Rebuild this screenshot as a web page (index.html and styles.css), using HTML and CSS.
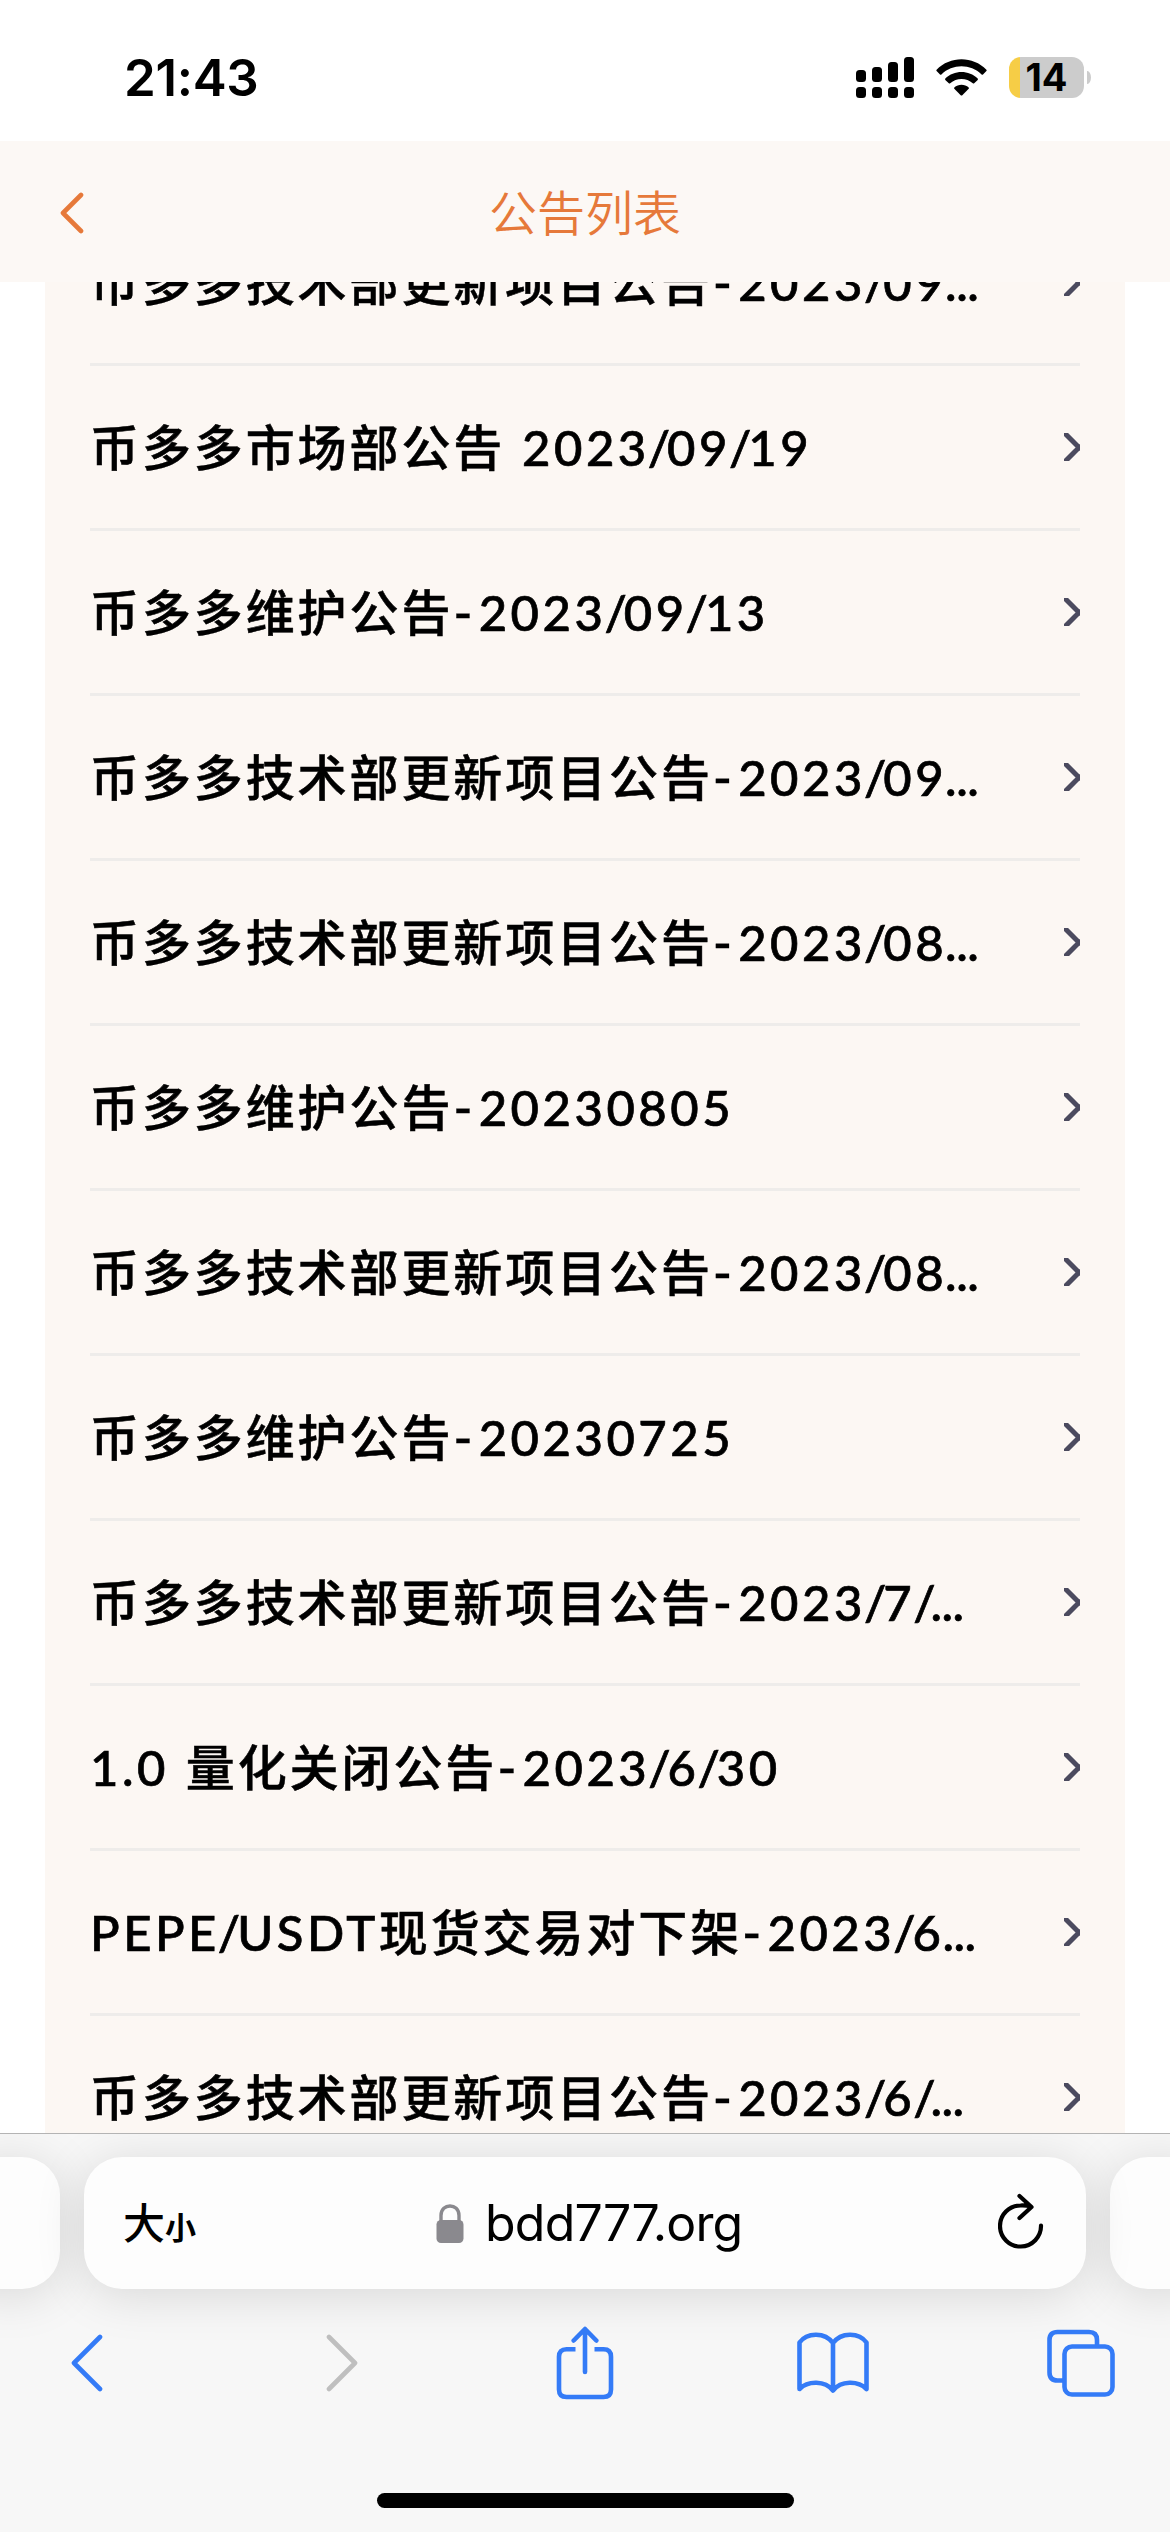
FILE: index.html
```html
<!DOCTYPE html>
<html lang="zh-CN">
<head>
    <meta charset="UTF-8">
    <title>公告列表</title>
    <link rel="stylesheet" href="styles.css">
</head>
<body>
    <div class="status-bar">
        <div class="time">21:43</div>
        <div class="status-icons">
            <svg class="signal" width="58" height="41" viewBox="0 0 58 41">
                <rect x="0" y="13" width="10" height="12" rx="3.5"/>
                <rect x="16" y="10" width="10" height="15" rx="3.5"/>
                <rect x="32" y="5" width="10" height="20" rx="3.5"/>
                <rect x="48" y="0" width="10" height="25" rx="3.5"/>
                <rect x="0" y="30" width="10" height="11" rx="3.5"/>
                <rect x="16" y="30" width="10" height="11" rx="3.5"/>
                <rect x="32" y="30" width="10" height="11" rx="3.5"/>
                <rect x="48" y="30" width="10" height="11" rx="3.5"/>
            </svg>
            <svg class="wifi" width="51" height="37" viewBox="0 0 51 37">
                <path d="M0.6 10.8C14-3.2 37-3.2 50.4 10.8Q50.9 11.4 50.4 12L47 15.4Q46.3 16 45.6 15.4C34.5 4.6 16.5 4.6 5.4 15.4Q4.7 16 4 15.4L0.6 12Q0.1 11.4 0.6 10.8Z"/>
                <path d="M9.3 19.6C18 10.8 33 10.8 41.7 19.6Q42.2 20.3 41.7 20.9L38.2 24.3Q37.5 24.9 36.8 24.3C30.5 18.5 20.5 18.5 14.2 24.3Q13.5 24.9 12.8 24.3L9.3 20.9Q8.8 20.3 9.3 19.6Z"/>
                <path d="M18.3 28.5C22.3 24.8 28.7 24.8 32.7 28.5Q33.2 29.2 32.7 29.8L26.3 36.2Q25.5 36.9 24.7 36.2L18.3 29.8Q17.8 29.2 18.3 28.5Z"/>
            </svg>
            <div class="battery"><span>14</span></div>
            <div class="battery-tip"></div>
        </div>
    </div>

    <div class="nav-bar">
        <svg class="nav-back" width="24" height="42" viewBox="0 0 24 42">
            <path d="M21 3L3 21L21 39"/>
        </svg>
        <h1>公告列表</h1>
    </div>

    <div class="content">
        <ul class="notice-list" id="noticeList"></ul>
    </div>

    <div class="browser-bar">
        <div class="tabs">
            <div class="tab tab-side"></div>
            <div class="tab tab-current">
                <div class="text-size">大<small>小</small></div>
                <div class="url">
                    <svg width="28" height="39" viewBox="0 0 28 39">
                        <path d="M5 18V11.5C5 -1.2 23 -1.2 23 11.5V18" fill="none" stroke="#8a898e" stroke-width="3.4"/>
                        <rect x="0.5" y="16" width="27" height="23" rx="4.5" fill="#8a898e"/>
                    </svg>
                    <span>bdd777.org</span>
                </div>
                <svg class="reload" width="46" height="56" viewBox="0 0 46 56">
                    <path d="M43 32.5A20.5 20.5 0 1 1 22.5 12.5Q28 12.2 33 13.6M21.5 3L33.5 14L21.5 25"/>
                </svg>
            </div>
            <div class="tab tab-side"></div>
        </div>
        <div class="toolbar">
            <svg class="back" width="34" height="58" viewBox="0 0 34 58"><path d="M30 3L4 29L30 55"/></svg>
            <svg class="forward" width="34" height="58" viewBox="0 0 34 58"><path d="M4 3L30 29L4 55"/></svg>
            <svg width="58" height="74" viewBox="0 0 58 74">
                <path d="M19.5 23.2H10.5Q3 23.2 3 30.7V63.5Q3 71 10.5 71H47.5Q55 71 55 63.5V30.7Q55 23.2 47.5 23.2H38.5" stroke-linecap="butt"/>
                <path d="M29 46V4M17.7 14.5L29 3L40.3 14.5"/>
            </svg>
            <svg width="72" height="62" viewBox="0 0 72 62">
                <path d="M36 11C28 0 10 0 2.5 10.5V57C11 48.5 28 48.5 36 58.5C44 48.5 61 48.5 69.5 57V10.5C62 0 44 0 36 11V58"/>
            </svg>
            <svg width="68" height="68" viewBox="0 0 68 68">
                <path d="M17.5 51.5H10.5Q2.5 51.5 2.5 43.5V11Q2.5 3 10.5 3H42Q50 3 50 11V17.5" stroke-linecap="butt"/>
                <rect x="17.5" y="17.5" width="48" height="48" rx="7.5"/>
            </svg>
        </div>
        <div class="home-indicator"></div>
    </div>

    <script>
        const noticeList = document.getElementById('noticeList');
        const notices = [
            '币多多技术部更新项目公告-2023/09...',
            '币多多市场部公告 2023/09/19',
            '币多多维护公告-2023/09/13',
            '币多多技术部更新项目公告-2023/09...',
            '币多多技术部更新项目公告-2023/08...',
            '币多多维护公告-20230805',
            '币多多技术部更新项目公告-2023/08...',
            '币多多维护公告-20230725',
            '币多多技术部更新项目公告-2023/7/...',
            '1.0 量化关闭公告-2023/6/30',
            'PEPE/USDT现货交易对下架-2023/6...',
            '币多多技术部更新项目公告-2023/6/...'
        ];

        // latin text, dashes, slashes and dots each get their own spacing
        function partClass(part) {
            if (part === '-') return 'dash';
            if (part === '/') return 'slash';
            if (part === '...') return 'dots';
            return /[A-Z\d ]/.test(part) ? 'latin' : 'cjk';
        }

        notices.forEach(function(title) {
            const item = document.createElement('li');
            const text = document.createElement('p');
            const arrow = document.createElement('b');
            arrow.className = 'arrow';

            title.match(/\.\.\.|[-\/]|[A-Z]+|[\d ]+(\.\d+ ?)?|[^\x00-\x7f]+/g).forEach(function(part) {
                const span = document.createElement('span');
                span.className = partClass(part);
                span.textContent = part;
                text.appendChild(span);
            });

            item.appendChild(text);
            item.appendChild(arrow);
            noticeList.appendChild(item);
        });
    </script>
</body>
</html>
```

FILE: styles.css
```css
* {
    margin: 0;
    padding: 0;
    box-sizing: border-box;
}

body {
    width: 1170px;
    height: 2532px;
    overflow: hidden;
    display: flex;
    flex-direction: column;
    background-color: #ffffff;
    color: #000000;
    font-family: Inter, "Noto Sans CJK SC", sans-serif;
}

.status-bar {
    height: 141px;
    padding: 0 79px 0 124px;
    display: flex;
    justify-content: space-between;
    align-items: flex-start;
}

.time {
    padding-top: 47px;
    font-size: 51px;
    font-weight: 600;
    line-height: 62px;
    letter-spacing: -0.3px;
}

.status-icons {
    display: flex;
    align-items: center;
    padding-top: 57px;
}

.wifi {
    margin: 0 22px;
}

.battery {
    width: 75px;
    height: 41px;
    border-radius: 12px;
    background: linear-gradient(to right, #f6cd46 11px, #cccccc 11px);
    font-size: 38px;
    font-weight: 700;
    line-height: 41px;
    text-align: center;
}

.battery-tip {
    width: 4px;
    height: 13px;
    margin-left: 3px;
    border-radius: 0 4px 4px 0 / 0 7px 7px 0;
    background-color: #cccccc;
}

.nav-bar {
    height: 141px;
    flex: none;
    position: relative;
    display: flex;
    align-items: center;
    justify-content: center;
    background-color: #fcf8f5;
    color: #e6793a;
}

.nav-back {
    position: absolute;
    left: 60px;
    top: 51px;
    fill: none;
    stroke: #e6793a;
    stroke-width: 4.6;
    stroke-linecap: round;
    stroke-linejoin: round;
}

.nav-bar h1 {
    padding-bottom: 4px;
    font-family: "Noto Sans CJK SC", sans-serif;
    font-size: 48px;
    font-weight: 350;
    line-height: 70px;
}

.content {
    height: 1851px;
    flex: none;
    padding: 0 45px;
    overflow: hidden;
}

/* list is scrolled up under the nav bar */
.notice-list {
    margin-top: -81px;
    padding: 0 45px;
    list-style: none;
    background-color: #fcf7f3;
}

.notice-list li {
    height: 165px;
    display: flex;
    align-items: center;
    justify-content: space-between;
    border-bottom: 3px solid #eeecea;
}

.notice-list p {
    padding-bottom: 3px;
    font-family: Lato, "Noto Sans CJK SC", sans-serif;
    font-size: 49px;
    font-weight: 500;
    line-height: 72px;
    white-space: pre;
    -webkit-text-stroke: 0.7px #000000;
}

.cjk {
    font-family: "Noto Sans CJK SC", sans-serif;
    letter-spacing: 2.9px;
    -webkit-text-stroke: 0.5px #000000;
}

.latin {
    letter-spacing: 3.5px;
    word-spacing: 1px;
}

.dash {
    margin-left: 1px;
    font-family: "Noto Sans", sans-serif;
    font-size: 54px;
    font-weight: 400;
    line-height: 1;
    letter-spacing: 7px;
    -webkit-text-stroke: 0.3px #000000;
}

.slash {
    margin-left: -2px;
    letter-spacing: -3px;
}

.dots {
    margin-left: -2px;
    letter-spacing: -0.5px;
}

.arrow {
    width: 16px;
    height: 28px;
    overflow: hidden;
    display: flex;
    align-items: center;
    justify-content: flex-end;
}

.arrow::before {
    content: "";
    flex: none;
    width: 22px;
    height: 22px;
    margin-right: 3px;
    border: solid #4b4a5e;
    border-width: 5px 5px 0 0;
    transform: rotate(45deg);
}

.browser-bar {
    height: 399px;
    flex: none;
    overflow: hidden;
    border-top: 1px solid #b4b4b4;
    background-color: #f7f7f7;
}

.tabs {
    margin: 23px -40px 0;
    display: flex;
    gap: 24px;
}

.tab {
    height: 132px;
    border-radius: 38px;
    background-color: #fdfdfd;
    box-shadow: 0 6px 50px rgba(0, 0, 0, 0.13);
}

.tab-side {
    width: 100px;
}

.tab-current {
    flex: 1;
    position: relative;
    display: flex;
    align-items: center;
    justify-content: space-between;
    padding: 0 42px 0 39px;
}

.text-size {
    font-family: "Noto Sans CJK SC", sans-serif;
    font-size: 42px;
    font-weight: 500;
    line-height: 60px;
}

.text-size small {
    font-size: 31px;
    font-weight: 700;
}

/* centred over the tab, whatever sits on either side */
.url {
    position: absolute;
    left: 352px;
    top: 35px;
    display: flex;
    align-items: center;
    gap: 21px;
    font-size: 50px;
    line-height: 62px;
    letter-spacing: -0.8px;
}

.reload {
    margin-top: -4px;
    fill: none;
    stroke: #000000;
    stroke-width: 4.2;
    stroke-linecap: round;
    stroke-linejoin: round;
}

/* five equal cells, the outer two run past the screen edges */
.toolbar {
    height: 74px;
    margin: 37px -35px 0;
    display: grid;
    grid-template-columns: repeat(5, 1fr);
    align-items: center;
    justify-items: center;
}

.toolbar svg {
    fill: none;
    stroke: #347bf7;
    stroke-width: 4.6;
    stroke-linecap: round;
    stroke-linejoin: round;
}

.toolbar .back {
    margin-right: 5px;
}

.toolbar .forward {
    margin-left: 9px;
    stroke: #bfbfbf;
}

.home-indicator {
    width: 417px;
    height: 15px;
    margin: 93px auto 0;
    border-radius: 8px;
    background-color: #000000;
}
```
